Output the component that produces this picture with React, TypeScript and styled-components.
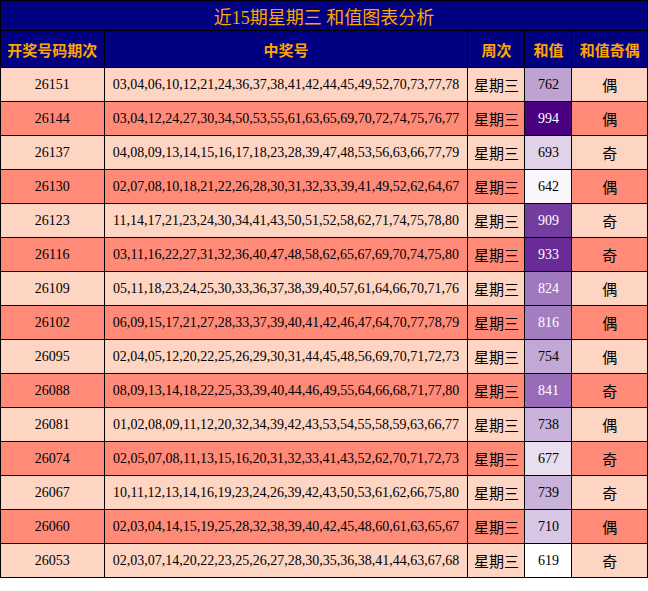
import * as React from "react";
import styled, { createGlobalStyle } from "styled-components";

const Global = createGlobalStyle`
  body { margin: 0; background: #fff; }
`;

const data: [string, string, number][] = [
  ["26151", "03,04,06,10,12,21,24,36,37,38,41,42,44,45,49,52,70,73,77,78", 762],
  ["26144", "03,04,12,24,27,30,34,50,53,55,61,63,65,69,70,72,74,75,76,77", 994],
  ["26137", "04,08,09,13,14,15,16,17,18,23,28,39,47,48,53,56,63,66,77,79", 693],
  ["26130", "02,07,08,10,18,21,22,26,28,30,31,32,33,39,41,49,52,62,64,67", 642],
  ["26123", "11,14,17,21,23,24,30,34,41,43,50,51,52,58,62,71,74,75,78,80", 909],
  ["26116", "03,11,16,22,27,31,32,36,40,47,48,58,62,65,67,69,70,74,75,80", 933],
  ["26109", "05,11,18,23,24,25,30,33,36,37,38,39,40,57,61,64,66,70,71,76", 824],
  ["26102", "06,09,15,17,21,27,28,33,37,39,40,41,42,46,47,64,70,77,78,79", 816],
  ["26095", "02,04,05,12,20,22,25,26,29,30,31,44,45,48,56,69,70,71,72,73", 754],
  ["26088", "08,09,13,14,18,22,25,33,39,40,44,46,49,55,64,66,68,71,77,80", 841],
  ["26081", "01,02,08,09,11,12,20,32,34,39,42,43,53,54,55,58,59,63,66,77", 738],
  ["26074", "02,05,07,08,11,13,15,16,20,31,32,33,41,43,52,62,70,71,72,73", 677],
  ["26067", "10,11,12,13,14,16,19,23,24,26,39,42,43,50,53,61,62,66,75,80", 739],
  ["26060", "02,03,04,14,15,19,25,28,32,38,39,40,42,45,48,60,61,63,65,67", 710],
  ["26053", "02,03,07,14,20,22,23,25,26,27,28,30,35,36,38,41,44,63,67,68", 619],
];

function sumColor(v: number) {
  const t = Math.max(0, Math.min(1, (v - 630) / (994 - 630)));
  const mix = (a: number, b: number) => Math.round(a + (b - a) * t);
  return `rgb(${mix(255, 75)},${mix(255, 0)},${mix(255, 130)})`;
}

const Table = styled.table`
  width: 648px;
  border-collapse: collapse;
  font-family: "Liberation Serif", "Noto Sans CJK SC", serif;
  font-size: 14px;
  color: #000;
`;

const Title = styled.th`
  height: 27px;
  background: #000080;
  color: #ffa500;
  font-weight: normal;
  font-size: 18px;
  border: 1.5px solid #000;
  font-family: "Liberation Serif", "Noto Sans CJK SC", sans-serif;
`;

const Head = styled.th<{ $w: number }>`
  width: ${p => p.$w}px;
  height: 34px;
  background: #000080;
  color: #ffa500;
  font-size: 15px;
  font-weight: bold;
  border: 1.5px solid #000;
  font-family: "Noto Sans CJK SC", sans-serif;
`;

const Row = styled.tr<{ $dark: boolean }>`
  background: ${p => (p.$dark ? "#ff8a78" : "#fdd5c2")};
`;

const Cell = styled.td<{ $cjk?: boolean }>`
  height: 33px;
  text-align: center;
  border: 1.5px solid #000;
  padding: 0;
  font-size: ${p => (p.$cjk ? "15px" : "14px")};
  font-family: ${p => (p.$cjk ? '"Noto Sans CJK SC", sans-serif' : '"Liberation Serif", serif')};
`;

export default function App() {
  return (
    <>
      <Global />
      <Table>
        <thead>
          <tr><Title colSpan={5}>近15期星期三 和值图表分析</Title></tr>
          <tr>
            <Head $w={106}>开奖号码期次</Head>
            <Head $w={362}>中奖号</Head>
            <Head $w={57}>周次</Head>
            <Head $w={46}>和值</Head>
            <Head $w={77}>和值奇偶</Head>
          </tr>
        </thead>
        <tbody>
          {data.map(([id, nums, sum], i) => (
            <Row key={id} $dark={i % 2 === 1}>
              <Cell>{id}</Cell>
              <Cell>{nums}</Cell>
              <Cell $cjk>星期三</Cell>
              <Cell style={{ background: sumColor(sum), color: sum > 800 ? "#fff" : "#000" }}>{sum}</Cell>
              <Cell $cjk>{sum % 2 === 0 ? "偶" : "奇"}</Cell>
            </Row>
          ))}
        </tbody>
      </Table>
    </>
  );
}
